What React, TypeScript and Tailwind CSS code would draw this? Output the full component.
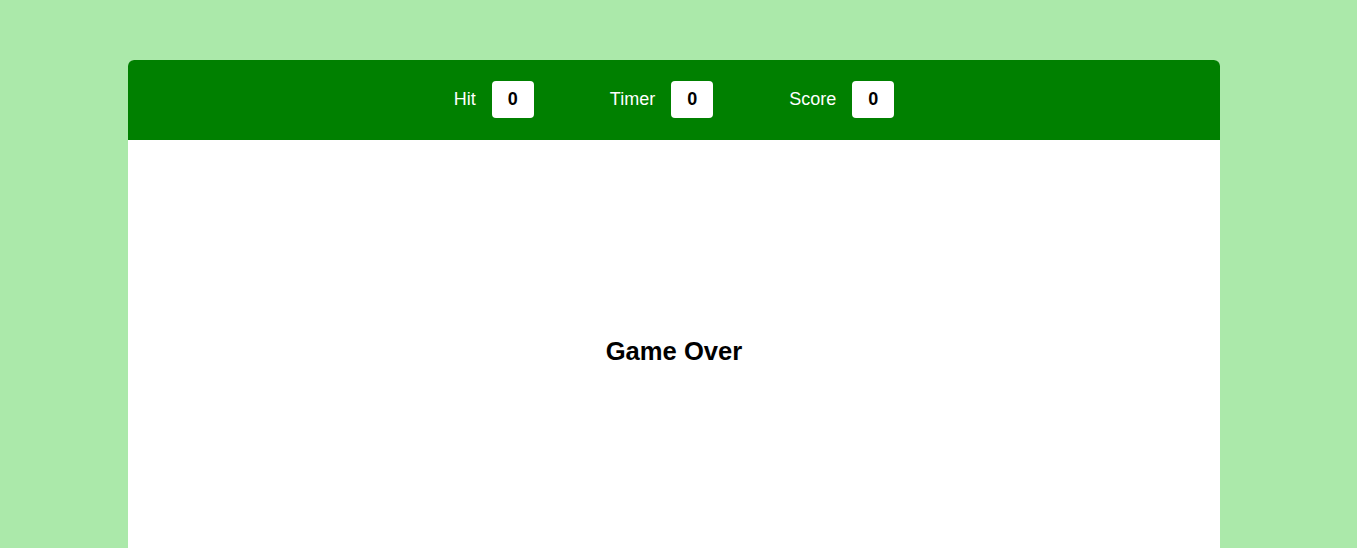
import React from 'react';

const stats = [
  { label: 'Hit', value: 0 },
  { label: 'Timer', value: 0 },
  { label: 'Score', value: 0 },
];

export default function App() {
  return (
    <div className="min-h-screen bg-[#abe9aa] pt-[60px] font-['Liberation_Sans',Arial,sans-serif]">
      <div className="ml-[128px] w-[1092px] overflow-hidden rounded-t-[6px] bg-white">
        {/* Header */}
        <div className="flex h-[80px] items-center justify-center gap-[76px] bg-[#008000] pb-[2px]">
          {stats.map((s) => (
            <div key={s.label} className="flex items-center gap-4">
              <span className="text-[18px] text-white">{s.label}</span>
              <div className="flex h-[37px] w-[42px] items-center justify-center rounded-[4px] bg-white text-[18px] font-bold text-black">
                {s.value}
              </div>
            </div>
          ))}
        </div>

        {/* Game area */}
        <div className="flex h-[422px] items-center justify-center">
          <h1 className="text-[25.6px] font-bold text-black">Game Over</h1>
        </div>
      </div>
    </div>
  );
}
